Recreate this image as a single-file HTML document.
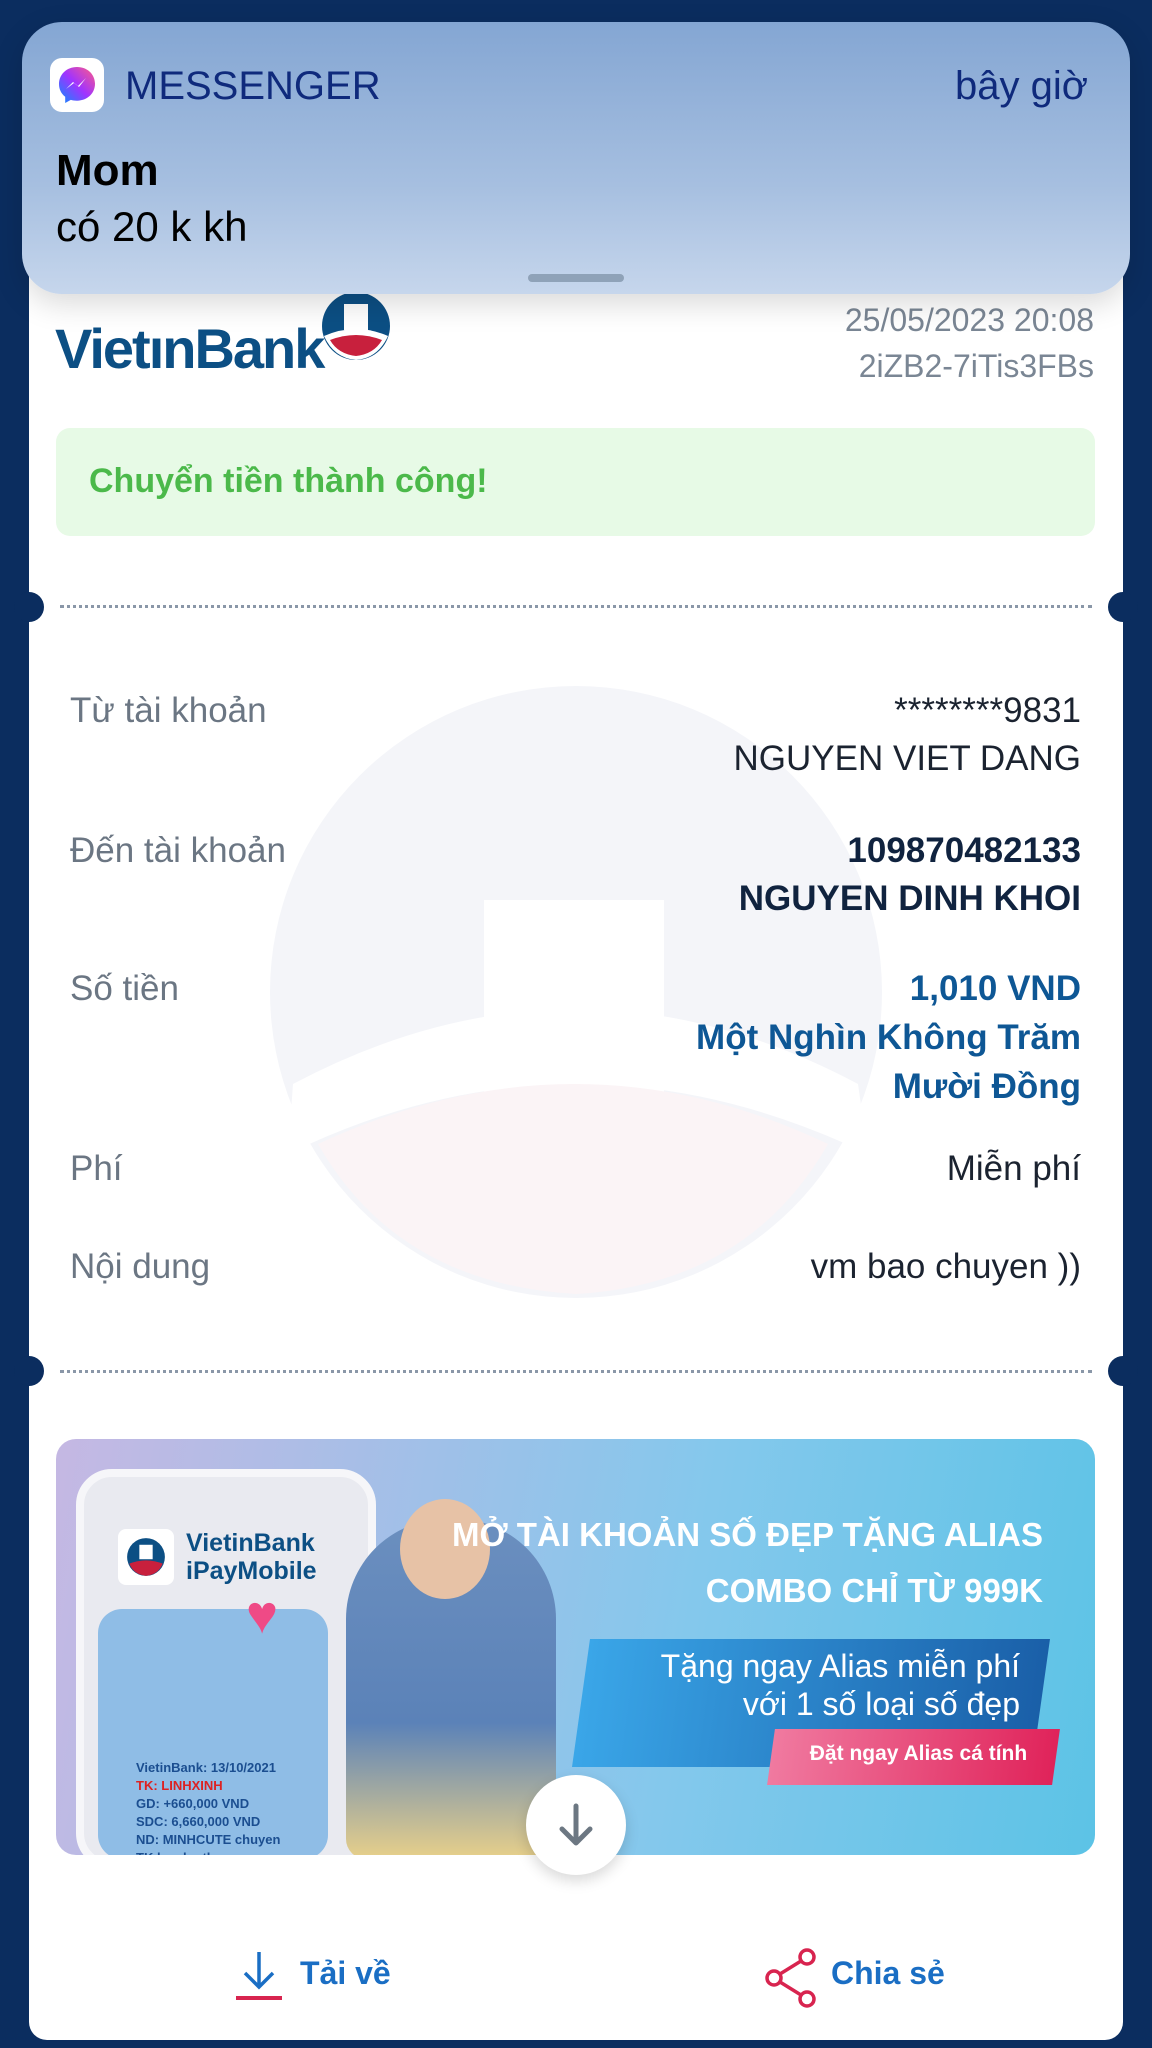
<!DOCTYPE html>
<html><head><meta charset="utf-8"><style>
*{margin:0;padding:0;box-sizing:border-box}
body{width:1152px;height:2048px;background:#0b2d5f;position:relative;overflow:hidden;font-family:"Liberation Sans",sans-serif}
.abs{position:absolute}
.card{left:29px;top:240px;width:1094px;height:1800px;background:#fff;border-radius:0 0 18px 18px}
.notif{left:22px;top:22px;width:1108px;height:272px;border-radius:40px;background:linear-gradient(#84a6d3,#a6bfe0 60%,#c6d6ec);box-shadow:0 10px 30px rgba(0,0,0,.15)}
.r{right:71px;text-align:right}
.lbl{left:70px;color:#6b7683;font-size:35px}
.val{color:#1b2330;font-size:35px}
.dots{left:60px;width:1032px;height:0;border-top:3px dotted #8a97a8}
.notch{width:30px;height:30px;border-radius:50%;background:#0b2d5f}
</style></head><body>
<div class="abs card"></div>
<svg class="abs" style="left:268px;top:684px" width="616" height="616" viewBox="0 0 616 616">
<circle cx="308" cy="308" r="306" fill="#f4f5f9"/>
<rect x="216" y="216" width="180" height="230" fill="#fff"/>
<path d="M25 400 Q308 250 590 400 L600 470 Q308 330 20 470Z" fill="#fff"/>
<path d="M50 460 Q308 340 560 460 Q480 600 308 610 Q130 600 50 460Z" fill="#fbf4f6"/>
</svg>
<div class="abs" style="left:55px;top:316px;font-size:56px;font-weight:bold;color:#0c4f84;letter-spacing:-2px">VietınBank</div>
<svg class="abs" style="left:320px;top:290px" width="72" height="72" viewBox="0 0 72 72">
<circle cx="36" cy="36" r="34" fill="#0c4f84"/><rect x="24" y="14" width="24" height="26" fill="#fff"/>
<path d="M4 46 Q36 32 68 46 Q58 68 36 70 Q14 68 4 46Z" fill="#fff"/>
<path d="M10 50 Q36 40 62 50 Q54 64 36 66 Q18 64 10 50Z" fill="#c8203d"/>
</svg>
<div class="abs" style="right:58px;top:302px;font-size:32px;color:#7a8694">25/05/2023 20:08</div>
<div class="abs" style="right:58px;top:348px;font-size:32px;color:#7a8694">2iZB2-7iTis3FBs</div>
<div class="abs" style="left:56px;top:428px;width:1039px;height:108px;background:#e7fae6;border-radius:14px"></div>
<div class="abs" style="left:89px;top:462px;font-size:34px;font-weight:bold;color:#4bb94a">Chuyển tiền thành công!</div>
<div class="abs dots" style="top:605px"></div>
<div class="abs notch" style="left:14px;top:592px"></div><div class="abs notch" style="left:1108px;top:592px"></div>
<div class="abs lbl" style="top:691px">Từ tài khoản</div>
<div class="abs r val" style="top:691px">********9831</div>
<div class="abs r val" style="top:739px">NGUYEN VIET DANG</div>
<div class="abs lbl" style="top:831px">Đến tài khoản</div>
<div class="abs r val" style="top:831px;font-weight:bold;color:#10233f">109870482133</div>
<div class="abs r val" style="top:879px;font-weight:bold;color:#10233f">NGUYEN DINH KHOI</div>
<div class="abs lbl" style="top:969px">Số tiền</div>
<div class="abs r val" style="top:969px;font-weight:bold;color:#0e5795">1,010 VND</div>
<div class="abs r val" style="top:1018px;font-weight:bold;color:#0e5795">Một Nghìn Không Trăm</div>
<div class="abs r val" style="top:1067px;font-weight:bold;color:#0e5795">Mười Đồng</div>
<div class="abs lbl" style="top:1149px">Phí</div>
<div class="abs r val" style="top:1149px">Miễn phí</div>
<div class="abs lbl" style="top:1247px">Nội dung</div>
<div class="abs r val" style="top:1247px">vm bao chuyen ))</div>
<div class="abs dots" style="top:1370px"></div>
<div class="abs notch" style="left:14px;top:1356px"></div><div class="abs notch" style="left:1108px;top:1356px"></div>
<div class="abs" style="left:56px;top:1439px;width:1039px;height:416px;border-radius:20px;overflow:hidden;background:linear-gradient(100deg,#c5b8e3 0%,#9fc0e8 35%,#84c8ec 60%,#5cc3e6 100%)">
 <div class="abs" style="left:20px;top:30px;width:300px;height:400px;border-radius:36px;background:#e9eaf0;border:8px solid #f6f6f9"></div>
 <div class="abs" style="left:62px;top:90px;width:56px;height:56px;background:#fff;border-radius:8px"></div>
 <svg class="abs" style="left:70px;top:98px" width="40" height="40" viewBox="0 0 72 72"><circle cx="36" cy="36" r="34" fill="#0c4f84"/><rect x="24" y="14" width="24" height="26" fill="#fff"/><path d="M6 48 Q36 36 66 48 Q58 68 36 70 Q14 68 6 48Z" fill="#c8203d"/></svg>
 <div class="abs" style="left:130px;top:90px;font-size:25px;font-weight:bold;color:#0c4f84;line-height:28px">VietinBank<br>iPayMobile</div>
 <div class="abs" style="left:42px;top:170px;width:230px;height:250px;border-radius:24px;background:#8fbde6"></div>
 <div class="abs" style="left:190px;top:145px;font-size:54px;color:#ef4a86">♥</div>
 <div class="abs" style="left:80px;top:320px;font-size:13px;color:#1b4e90;line-height:18px;font-weight:bold">VietinBank: 13/10/2021<br><span style="color:#d22">TK: LINHXINH</span><br>GD: +660,000 VND<br>SDC: 6,660,000 VND<br>ND: MINHCUTE chuyen<br>TK hay ho the</div>
 <div class="abs" style="left:290px;top:80px;width:210px;height:340px;border-radius:100px 100px 20px 20px;background:linear-gradient(#6b8fbf,#5b82b8 60%,#e8d08a)"></div>
 <div class="abs" style="left:344px;top:60px;width:90px;height:100px;border-radius:50%;background:#e7c2a6"></div>
 <div class="abs" style="right:52px;top:68px;font-size:33px;font-weight:bold;color:#fff;text-align:right;line-height:56px">MỞ TÀI KHOẢN SỐ ĐẸP TẶNG ALIAS<br>COMBO CHỈ TỪ 999K</div>
 <div class="abs" style="left:525px;top:200px;width:460px;height:128px;background:linear-gradient(90deg,#3aa6e8,#1a5fa8);transform:skewX(-8deg)"></div>
 <div class="abs" style="right:75px;top:208px;font-size:32px;color:#fff;text-align:right;line-height:38px">Tặng ngay Alias miễn phí<br>với 1 số loại số đẹp</div>
 <div class="abs" style="left:715px;top:290px;width:285px;height:56px;background:linear-gradient(90deg,#f07aa0,#e0235a);transform:skewX(-8deg)"></div>
 <div class="abs" style="left:730px;top:303px;width:265px;text-align:center;font-size:21px;font-weight:bold;color:#fff">Đặt ngay Alias cá tính</div>
</div>
<div class="abs" style="left:526px;top:1775px;width:100px;height:100px;border-radius:50%;background:#fff;box-shadow:0 6px 14px rgba(0,0,0,.15)"></div>
<svg class="abs" style="left:551px;top:1800px" width="50" height="50" viewBox="0 0 50 50"><path d="M25 6V42M11 29L25 43L39 29" stroke="#6c7782" stroke-width="5" fill="none" stroke-linecap="round" stroke-linejoin="round"/></svg>
<svg class="abs" style="left:232px;top:1950px" width="54" height="52" viewBox="0 0 54 52"><path d="M27 2V36M13 23L27 37L41 23" stroke="#1a6ec4" stroke-width="3.5" fill="none"/><path d="M4 48H50" stroke="#d8244f" stroke-width="4"/></svg>
<div class="abs" style="left:300px;top:1955px;font-size:32px;font-weight:bold;color:#1a6ec4">Tải về</div>
<svg class="abs" style="left:763px;top:1946px" width="56" height="64" viewBox="0 0 56 64"><g stroke="#d8244f" stroke-width="3.5" fill="none"><circle cx="44" cy="11" r="7"/><circle cx="11" cy="32" r="7"/><circle cx="44" cy="53" r="7"/><path d="M17 28L38 15M17 36L38 49"/></g></svg>
<div class="abs" style="left:831px;top:1955px;font-size:32px;font-weight:bold;color:#1a6ec4">Chia sẻ</div>
<div class="abs notif"></div>
<div class="abs" style="left:50px;top:58px;width:54px;height:54px;border-radius:12px;background:#fff"></div>
<svg class="abs" style="left:54px;top:62px" width="46" height="46" viewBox="0 0 46 46"><defs><linearGradient id="g" x1="0" y1="1" x2="1" y2="0"><stop offset="0" stop-color="#0a8dff"/><stop offset=".5" stop-color="#a033ff"/><stop offset="1" stop-color="#ff5c87"/></linearGradient></defs><path d="M23 5C12.5 5 5 12.5 5 22c0 5.3 2.3 9.8 6.2 12.8V41l5.6-3.1c1.9.5 4 .8 6.2.8 10.5 0 18-7.5 18-16.9S33.5 5 23 5z" fill="url(#g)"/><path d="M12 27l7-7 5 4 8-8-7 9-5-4z" fill="#fff"/></svg>
<div class="abs" style="left:125px;top:64px;font-size:40px;color:#0f2a7c">MESSENGER</div>
<div class="abs" style="right:64px;top:64px;font-size:40px;color:#0f2a7c">bây giờ</div>
<div class="abs" style="left:56px;top:146px;font-size:44px;font-weight:bold;color:#000">Mom</div>
<div class="abs" style="left:56px;top:203px;font-size:42px;color:#000">có 20 k kh</div>
<div class="abs" style="left:528px;top:274px;width:96px;height:8px;border-radius:4px;background:#8fa2b8"></div>
</body></html>
